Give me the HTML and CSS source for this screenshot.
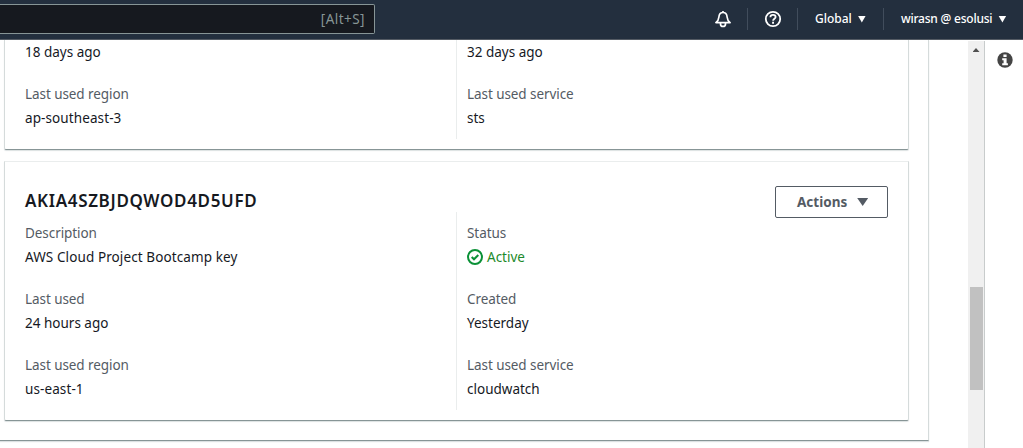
FILE: index.html
```
<!DOCTYPE html>
<html lang="en">
<head>
<meta charset="utf-8">
<title>Access keys</title>
<link rel="stylesheet" href="styles.css">
</head>
<body>
<header class="topbar">
  <div class="search"><span class="shortcut">[Alt+S]</span></div>
  <nav class="nav">
    <div class="nav-item bell"><svg width="18" height="18" viewBox="0 0 18 18" fill="none" stroke="#fff" stroke-width="1.7" stroke-linejoin="round"><path d="M9 1v1.500M1.900 12.600h14.200C14.300 11.300 13.300 9.500 13.100 7 12.900 4.300 11.300 2.500 9 2.500S5.100 4.300 4.900 7c-.2 2.500-1.200 4.300-3 5.600Z"/><path d="M6.500 13v.900a2.500 2.500 0 0 0 5 0V13"/></svg></div>
    <div class="nav-item help"><svg width="18" height="18" viewBox="0 0 18 18" fill="none" stroke="#fff"><circle cx="9" cy="9" r="7.200" stroke-width="1.800"/><path d="M6.400 7.200C6.400 5.700 7.500 4.900 9 4.900s2.600.8 2.600 2.100c0 1.800-2.500 1.700-2.500 3.700" stroke-width="1.800"/><path d="M8.100 11.800h1.900v1.900H8.100z" fill="#fff" stroke="none"/></svg></div>
    <div class="nav-item region"><span>Global</span><i class="caret"></i></div>
    <div class="nav-item account"><span class="account-name">wirasn @ esolusi</span><i class="caret"></i></div>
  </nav>
</header>
<div class="workspace">
  <main class="content">
    <section class="panel">
      <article class="card card-first">
        <div class="columns">
          <dl class="column">
            <div class="field"><dd>18 days ago</dd></div>
            <div class="field"><dt>Last used region</dt><dd class="wide">ap-southeast-3</dd></div>
          </dl>
          <dl class="column">
            <div class="field"><dd>32 days ago</dd></div>
            <div class="field"><dt>Last used service</dt><dd>sts</dd></div>
          </dl>
        </div>
      </article>
      <article class="card card-second">
        <div class="card-head">
          <h3>AKIA4SZBJDQWOD4D5UFD</h3>
          <button class="actions" type="button"><span>Actions</span><i class="caret caret-dark"></i></button>
        </div>
        <div class="columns">
          <dl class="column">
            <div class="field"><dt>Description</dt><dd class="wide">AWS Cloud Project Bootcamp key</dd></div>
            <div class="field"><dt>Last used</dt><dd>24 hours ago</dd></div>
            <div class="field"><dt>Last used region</dt><dd class="wide">us-east-1</dd></div>
          </dl>
          <dl class="column">
            <div class="field"><dt>Status</dt><dd class="status"><svg width="16" height="16" viewBox="0 0 16 16" fill="none" stroke="#0b9137"><circle cx="8" cy="8" r="7" stroke-width="2"/><path d="M4.700 8l2.300 2.300L11.300 6" stroke-width="2"/></svg><span>Active</span></dd></div>
            <div class="field"><dt>Created</dt><dd>Yesterday</dd></div>
            <div class="field"><dt>Last used service</dt><dd>cloudwatch</dd></div>
          </dl>
        </div>
      </article>
    </section>
  </main>
  <div class="scrollbar"><i class="scroll-up"></i><i class="thumb"></i></div>
  <aside class="info-rail"><svg width="16" height="16" viewBox="0 0 16 16"><circle cx="8" cy="8" r="7.700" fill="#444"/><path d="M6.400 2.600h3.200v2.500H6.400zM5.200 6.300h4.400v5h1.300v1.900H5.200v-1.900h1.400V8.200H5.200z" fill="#fff"/></svg></aside>
</div>
</body>
</html>
```
FILE: styles.css
```
* { box-sizing: border-box; }
body {
  margin: 0;
  width: 1023px;
  height: 448px;
  overflow: hidden;
  background: #fff;
  color: #16191f;
  font: 13.5px/24px "Noto Sans", "Open Sans", sans-serif;
}
dl, dd, dt, h3 { margin: 0; }
svg { display: block; flex: none; }

.topbar {
  display: flex;
  justify-content: space-between;
  height: 40px;
  background: #232f3e;
  border-bottom: 1px solid #545b64;
}
.search {
  display: flex;
  align-items: center;
  justify-content: flex-end;
  width: 375px;
  height: 30px;
  margin-top: 4px;
  padding-right: 9px;
  background: #16191f;
  border: 1px solid #879596;
  border-left: 0;
  border-radius: 0 2px 2px 0;
  color: #879596;
}
.shortcut { letter-spacing: 0.45px; }
.nav { display: flex; padding-top: 8px; }
.nav-item {
  display: flex;
  align-items: center;
  height: 22px;
  border-left: 1px solid #414d5c;
  color: #fff;
  font-size: 12px;
  font-weight: 500;
  white-space: nowrap;
}
.bell { width: 33px; border: 0; }
.help { width: 50px; padding-left: 16px; }
.region { width: 86px; padding-left: 17px; }
.account { width: 140px; padding-left: 17px; }
.account-name { letter-spacing: -0.22px; }
.caret {
  width: 8px;
  height: 7px;
  margin-left: 6px;
  background: #fff;
  clip-path: polygon(0 0, 100% 0, 50% 100%);
}

.workspace { display: flex; height: 408px; }
.content { width: 968px; overflow: hidden; }
.panel {
  width: 929px;
  height: 401px;
  padding-left: 4px;
  border-right: 1px solid #d5dbdb;
  border-bottom: 1px solid #879596;
  box-shadow: 0 1px 1px #dce1e2;
}
.card {
  width: 905px;
  border: 1px solid #d5dbdb;
  border-bottom-color: #879596;
  border-radius: 0 0 2px 2px;
  box-shadow: 0 1px 1px #dce1e2;
  padding: 0 20px;
}
.card-first { height: 110px; border-top: 0; }
.card-second { height: 260px; margin-top: 11px; padding-top: 24px; border-top-color: #eaeded; }
.columns { display: grid; grid-template-columns: 431px 432px; }
.column { display: flex; flex-direction: column; gap: 18px; padding: 9px 0; }
.column + .column { padding-left: 10px; border-left: 1px solid #eaeded; }
.card-first .column { padding-top: 0; }
.field { white-space: nowrap; }
dt { color: #545b64; letter-spacing: -0.07px; }
.wide { letter-spacing: 0.1px; }
.status { display: flex; align-items: center; gap: 4px; color: #1d8a2b; }
.card-head { display: flex; justify-content: space-between; height: 26px; }
h3 { font-size: 17px; font-weight: 600; line-height: 29px; letter-spacing: 0.66px; }
.actions {
  display: flex;
  align-items: center;
  width: 113px;
  height: 32px;
  padding: 0 0 0 21px;
  background: #fff;
  border: 1px solid #545b64;
  border-radius: 2px;
  color: #545b64;
  font: 700 13.5px/22px "Noto Sans", sans-serif;
}
.caret-dark { width: 11px; height: 8px; margin-left: 10px; background: #545b64; }

.scrollbar {
  display: flex;
  flex-direction: column;
  align-items: center;
  width: 17px;
  margin-top: 1px;
  padding-top: 7px;
  background: #f0f0f0;
  border-right: 1px solid #c8cccc;
}
.scroll-up { width: 7px; height: 4px; background: #505050; clip-path: polygon(50% 0, 100% 100%, 0 100%); }
.thumb { width: 13px; height: 103px; margin: 235px 0 0 1px; background: #c1c1c1; }
.info-rail { padding: 12px 0 0 12px; }
```
